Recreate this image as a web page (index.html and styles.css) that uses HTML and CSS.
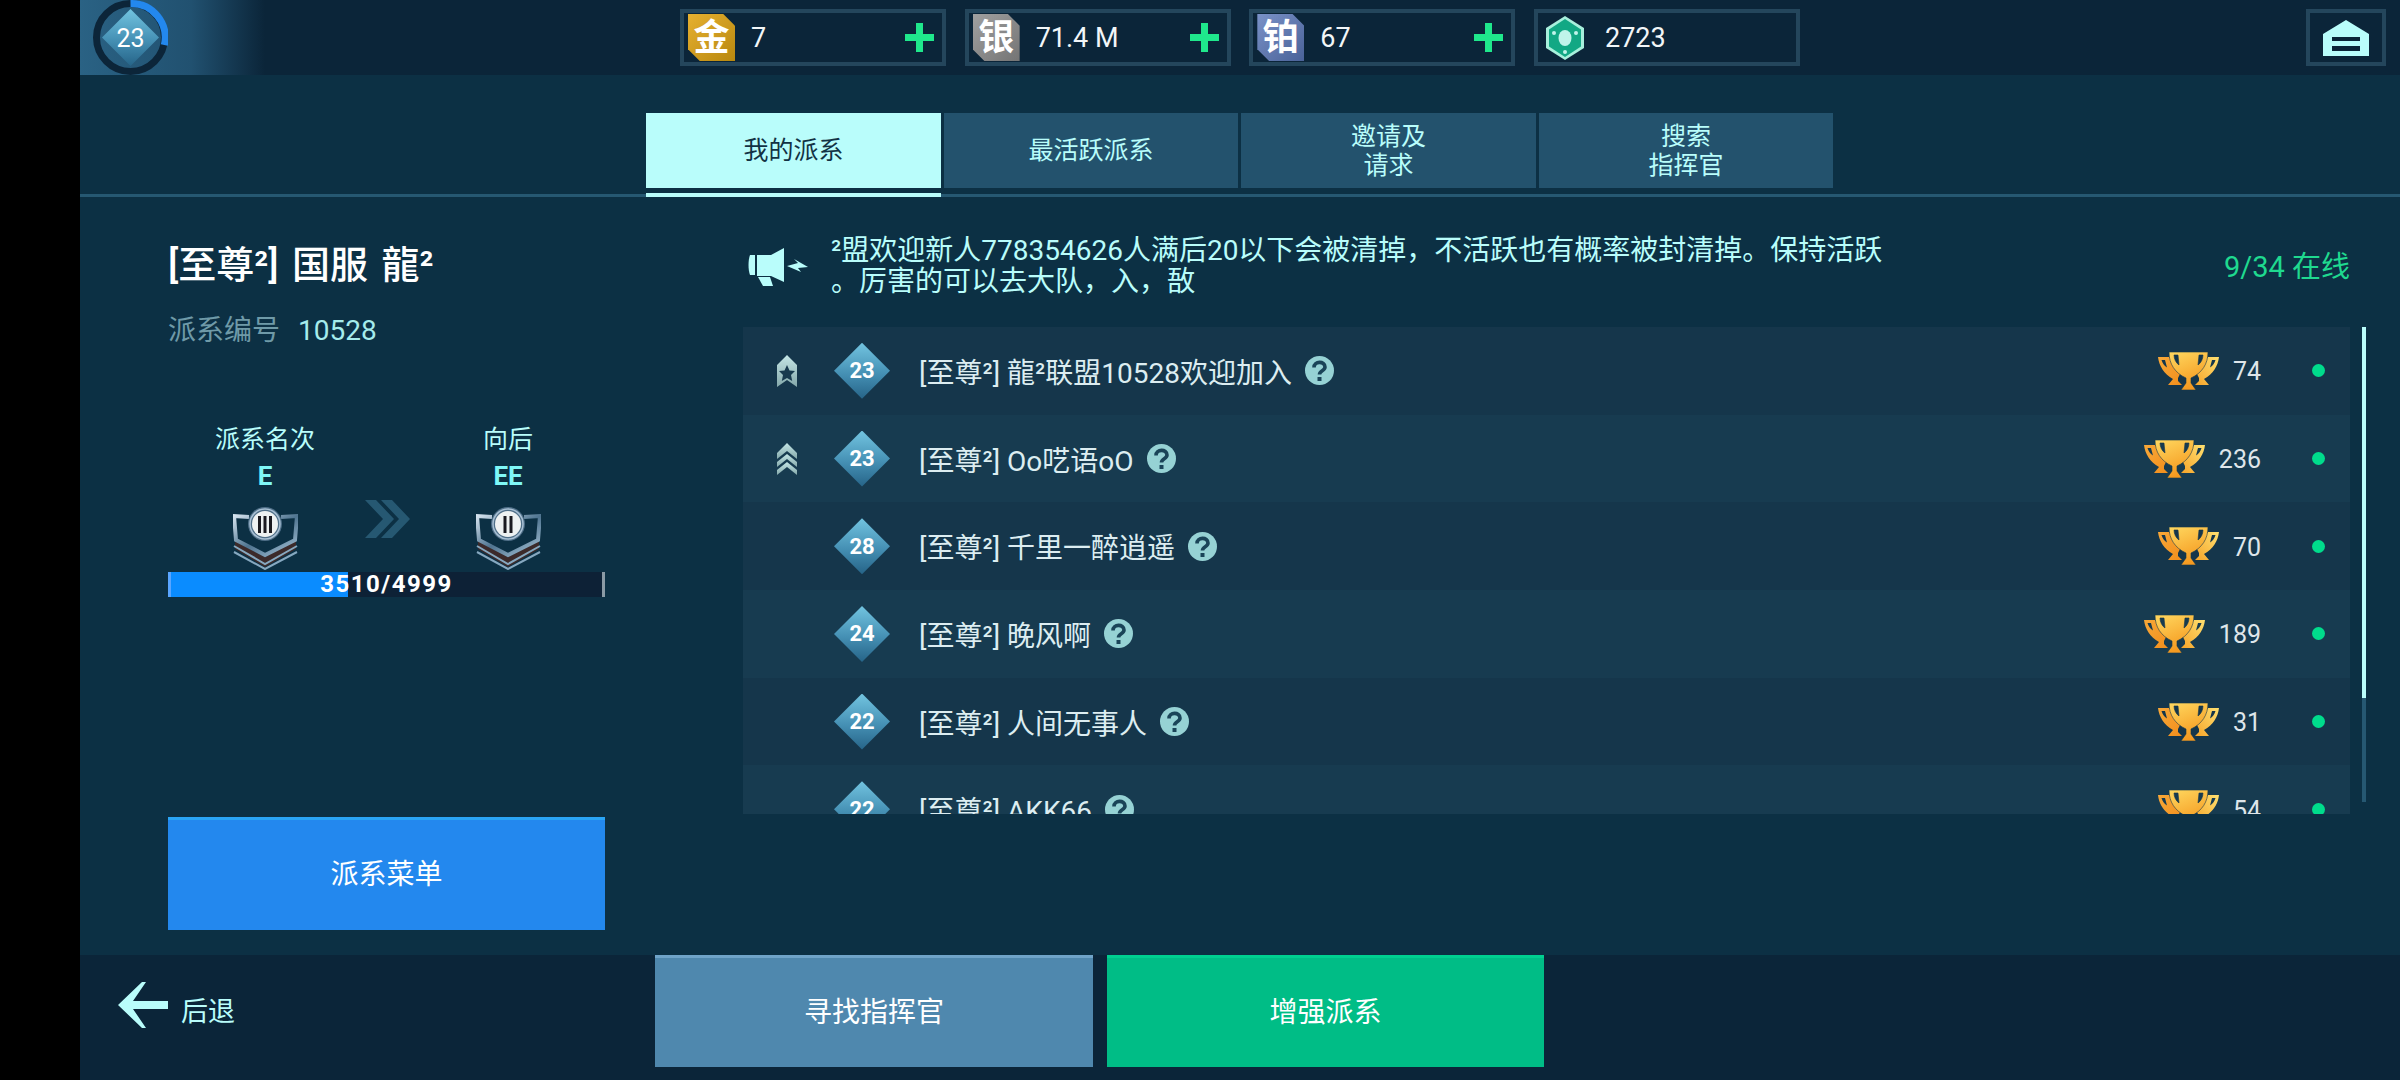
FILE: index.html
```html
<!DOCTYPE html>
<html lang="zh-CN">
<head>
    <meta charset="UTF-8">
    <title>我的派系</title>
    <link rel="stylesheet" href="styles.css">
</head>
<body>
    <svg class="defs" width="0" height="0">
        <defs>
            <linearGradient id="gradCup" x1="0" y1="0" x2="0.4" y2="1">
                <stop offset="0" stop-color="#ffd860"/>
                <stop offset="1" stop-color="#f59a20"/>
            </linearGradient>
            <linearGradient id="gradSideL" x1="0" y1="0" x2="1" y2="1">
                <stop offset="0" stop-color="#f8a838"/>
                <stop offset="1" stop-color="#f28e1c"/>
            </linearGradient>
            <linearGradient id="gradSideR" x1="1" y1="0" x2="0" y2="1">
                <stop offset="0" stop-color="#ffe070"/>
                <stop offset="1" stop-color="#f6a42a"/>
            </linearGradient>
            <linearGradient id="gradDiamond" x1="0" y1="0" x2="0" y2="1">
                <stop offset="0" stop-color="#72c4e0"/>
                <stop offset="0.55" stop-color="#4590b4"/>
                <stop offset="1" stop-color="#266488"/>
            </linearGradient>
            <linearGradient id="gradRank" x1="0" y1="0" x2="0" y2="1">
                <stop offset="0" stop-color="#c4e6e6"/>
                <stop offset="1" stop-color="#84a8aa"/>
            </linearGradient>
            <linearGradient id="gradSteel" x1="0" y1="0" x2="1" y2="1">
                <stop offset="0" stop-color="#d4e2ee"/>
                <stop offset="0.5" stop-color="#4f7490"/>
                <stop offset="1" stop-color="#a8c4d8"/>
            </linearGradient>
            <symbol id="trophy" viewBox="0 0 61 38">
                <path fill="url(#gradSideL)" fill-rule="evenodd" d="M0 5H11L24 18L20 26V29L24 33H10L15 27C6 22 1 14 0 5ZM3.500 8H7L9 15.500C6 13.500 4.500 11 3.500 8Z"/>
                <path fill="url(#gradSideR)" fill-rule="evenodd" d="M61 5H50L37 18L41 26V29L37 33H51L46 27C55 22 60 14 61 5ZM57.500 8H54L52 15.500C55 13.500 56.500 11 57.500 8Z"/>
                <path fill="url(#gradCup)" fill-rule="evenodd" stroke="#16374c" stroke-width="0.6" d="M11 0H50C50 12 44 21 33 26V31L38 38H23L28 31V26C17 21 11 12 11 0ZM16 3C16 7 18 11 21 13L20 3ZM45 3C45 7 43 11 40 13L41 3Z"/>
            </symbol>
            <symbol id="help" viewBox="0 0 29 29">
                <circle cx="14.500" cy="14.500" r="14.500" fill="#96d2d4"/>
                <path fill="none" stroke="#1a4458" stroke-width="3.600" d="M9 11.500C9 4.800 20 4.800 20 11C20 15 14.500 14.500 14.500 18.500"/>
                <rect x="12.500" y="21" width="4" height="4" fill="#1a4458"/>
            </symbol>
            <symbol id="badge" viewBox="0 0 65 63">
                <path fill="#3c2a2a" d="M2 34L32 50L63 34V42L32 60L2 42Z"/>
                <path fill="none" stroke="#86a8c0" stroke-width="2" d="M1 39L32 57L64 39M1 45L32 62L64 45"/>
                <path fill="none" stroke="url(#gradSteel)" stroke-width="4" d="M16 10L1 9L3 33L32 48L62 33L64 9L48 10"/>
                <circle cx="32" cy="17" r="17" fill="#4f6f88"/>
                <circle cx="32" cy="17" r="15" fill="none" stroke="#a8c0d4" stroke-width="1.500"/>
                <circle cx="32" cy="17" r="13" fill="#eef2f2"/>
            </symbol>
        </defs>
    </svg>

    <div class="black-strip"></div>

    <div class="screen">
        <header class="top-bar">
            <div class="level">
                <svg class="level-ring" viewBox="0 0 75 75">
                    <circle cx="37.500" cy="37.500" r="34" fill="none" stroke="#0c2539" stroke-width="7"/>
                    <path d="M37.500 3.500A34 34 0 0 1 71.300 45" fill="none" stroke="#2388ee" stroke-width="7"/>
                    <path d="M37.500 9L66 37.500L37.500 66L9 37.500Z" fill="url(#gradDiamond)"/>
                </svg>
                <span class="level-num">23</span>
            </div>

            <div class="chips">
                <div class="chip">
                    <span class="coin coin-gold">金</span>
                    <span class="chip-value">7</span>
                    <span class="plus"></span>
                </div>
                <div class="chip">
                    <span class="coin coin-silver">银</span>
                    <span class="chip-value">71.4 M</span>
                    <span class="plus"></span>
                </div>
                <div class="chip">
                    <span class="coin coin-plat">铂</span>
                    <span class="chip-value">67</span>
                    <span class="plus"></span>
                </div>
                <div class="chip">
                    <svg class="gem" viewBox="0 0 38 44">
                        <path d="M19 0L38 12V32L19 44L0 32V12Z" fill="#a8f0dc"/>
                        <path d="M19 3L35 13.500V30.500L19 41L3 30.500V13.500Z" fill="#12a884"/>
                        <ellipse cx="19" cy="22" rx="6.500" ry="8" fill="#c0f4ea"/>
                        <circle cx="8" cy="17" r="2" fill="#c0f4ea"/>
                        <circle cx="30" cy="17" r="2" fill="#c0f4ea"/>
                        <circle cx="19" cy="36" r="2" fill="#c0f4ea"/>
                    </svg>
                    <span class="chip-value">2723</span>
                </div>
            </div>

            <div class="home">
                <svg class="home-icon" viewBox="0 0 46 36">
                    <path fill="#b9fdfb" d="M23 0L46 14V36H37V17H9V36H0V14Z"/>
                    <rect x="9" y="21" width="28" height="5" fill="#b9fdfb"/>
                    <rect x="9" y="31" width="28" height="5" fill="#b9fdfb"/>
                </svg>
            </div>
        </header>

        <main class="main">
            <nav class="tabs">
                <div class="tab active">我的派系</div>
                <div class="tab">最活跃派系</div>
                <div class="tab">邀请及<br>请求</div>
                <div class="tab">搜索<br>指挥官</div>
            </nav>

            <div class="content">
                <aside class="faction">
                    <h1 class="faction-name">[至尊²] 国服 龍²</h1>
                    <p class="faction-id"><span class="faction-id-label">派系编号</span>10528</p>

                    <div class="ranks">
                        <div class="rank-col">
                            <div class="rank-label">派系名次</div>
                            <div class="rank-value">E</div>
                            <svg class="rank-badge" viewBox="0 0 65 63">
                                <use href="#badge"/>
                                <rect x="25" y="9" width="3" height="17" fill="#1a1a20"/>
                                <rect x="30.500" y="9" width="3" height="17" fill="#1a1a20"/>
                                <rect x="36" y="9" width="3" height="17" fill="#1a1a20"/>
                            </svg>
                        </div>
                        <svg class="rank-arrow" viewBox="0 0 45 38">
                            <path d="M0 0H11L29 19L11 38H0L18 19Z" fill="#265872"/>
                            <path d="M16 0H27L45 19L27 38H16L34 19Z" fill="#265872"/>
                        </svg>
                        <div class="rank-col rank-col-next">
                            <div class="rank-label">向后</div>
                            <div class="rank-value">EE</div>
                            <svg class="rank-badge" viewBox="0 0 65 63">
                                <use href="#badge"/>
                                <rect x="27.500" y="9" width="3" height="17" fill="#1a1a20"/>
                                <rect x="33.500" y="9" width="3" height="17" fill="#1a1a20"/>
                            </svg>
                        </div>
                    </div>

                    <div class="progress">
                        <div class="progress-fill"></div>
                        <span class="progress-text">3510/4999</span>
                    </div>

                    <button class="btn btn-menu">派系菜单</button>
                </aside>

                <section class="members">
                    <div class="notice">
                        <svg class="notice-icon" viewBox="0 0 60 38">
                            <path d="M2 7H7V27H2C0 22 0 12 2 7Z" fill="#b9fdfb"/>
                            <path d="M9 7H23L36 0V34L23 28H9Z" fill="#b9fdfb"/>
                            <path d="M10 29H22L25 38H15Z" fill="#b9fdfb"/>
                            <path d="M39 18L50 15L46 11L60 19L50 20L53 24Z" fill="#b9fdfb"/>
                        </svg>
                        <p class="notice-text">²盟欢迎新人778354626人满后20以下会被清掉，不活跃也有概率被封清掉。保持活跃<br>。厉害的可以去大队，入，敔</p>
                        <span class="online">9/34 在线</span>
                    </div>

                    <div class="list-wrap">
                        <div class="list">
                            <div class="row">
                                <div class="row-rank">
                                    <svg class="rank-icon" viewBox="0 0 20 32">
                                        <path d="M10 0L20 10V32L10 25L0 32V10Z" fill="url(#gradRank)"/>
                                        <path d="M10 10L12.500 15.500L18 16L14 20L15.200 26L10 23L4.800 26L6 20L2 16L7.500 15.500Z" fill="#173a4e"/>
                                    </svg>
                                </div>
                                <div class="level-tag">23</div>
                                <div class="row-name">[至尊²] 龍²联盟10528欢迎加入</div>
                                <svg class="help"><use href="#help"/></svg>
                                <svg class="trophy"><use href="#trophy"/></svg>
                                <div class="score">74</div>
                                <span class="dot"></span>
                            </div>
                            <div class="row">
                                <div class="row-rank">
                                    <svg class="rank-icon" viewBox="0 0 20 32">
                                        <path d="M10 0L20 10V16L10 8L0 16V10Z" fill="url(#gradRank)"/>
                                        <path d="M10 11L20 19V24L10 16L0 24V19Z" fill="url(#gradRank)"/>
                                        <path d="M10 19L20 27V32L10 24L0 32V27Z" fill="url(#gradRank)"/>
                                    </svg>
                                </div>
                                <div class="level-tag">23</div>
                                <div class="row-name">[至尊²] Oo呓语oO</div>
                                <svg class="help"><use href="#help"/></svg>
                                <svg class="trophy"><use href="#trophy"/></svg>
                                <div class="score">236</div>
                                <span class="dot"></span>
                            </div>
                            <div class="row">
                                <div class="row-rank"></div>
                                <div class="level-tag">28</div>
                                <div class="row-name">[至尊²] 千里一醉逍遥</div>
                                <svg class="help"><use href="#help"/></svg>
                                <svg class="trophy"><use href="#trophy"/></svg>
                                <div class="score">70</div>
                                <span class="dot"></span>
                            </div>
                            <div class="row">
                                <div class="row-rank"></div>
                                <div class="level-tag">24</div>
                                <div class="row-name">[至尊²] 晚风啊</div>
                                <svg class="help"><use href="#help"/></svg>
                                <svg class="trophy"><use href="#trophy"/></svg>
                                <div class="score">189</div>
                                <span class="dot"></span>
                            </div>
                            <div class="row">
                                <div class="row-rank"></div>
                                <div class="level-tag">22</div>
                                <div class="row-name">[至尊²] 人间无事人</div>
                                <svg class="help"><use href="#help"/></svg>
                                <svg class="trophy"><use href="#trophy"/></svg>
                                <div class="score">31</div>
                                <span class="dot"></span>
                            </div>
                            <div class="row">
                                <div class="row-rank"></div>
                                <div class="level-tag">22</div>
                                <div class="row-name">[至尊²] AKK66</div>
                                <svg class="help"><use href="#help"/></svg>
                                <svg class="trophy"><use href="#trophy"/></svg>
                                <div class="score">54</div>
                                <span class="dot"></span>
                            </div>
                        </div>
                        <div class="scrollbar"><div class="scrollbar-thumb"></div></div>
                    </div>
                </section>
            </div>
        </main>

        <footer class="bottom-bar">
            <div class="back">
                <svg class="back-icon" viewBox="0 0 50 46">
                    <path d="M24 0L28 0L15 19H50V27H15L28 46H24L0 23Z" fill="#b9fdfb"/>
                </svg>
                <span>后退</span>
            </div>
            <button class="btn btn-find">寻找指挥官</button>
            <button class="btn btn-boost">增强派系</button>
        </footer>
    </div>
</body>
</html>
```

FILE: styles.css
```css
:root {
    --bar-bg: #0b2539;
    --main-bg: #0c3044;
    --line: #265872;
    --pale: #b9fdfb;
    --row-dark: #15364b;
    --row-light: #173b50;
}

* {
    margin: 0;
    padding: 0;
    box-sizing: border-box;
}

body {
    width: 2400px;
    height: 1080px;
    overflow: hidden;
    display: flex;
    background: #000;
    color: #fff;
    font-family: Roboto, "Noto Sans CJK SC", sans-serif;
    font-size: 28px;
}

.defs {
    position: absolute;
}

.black-strip {
    width: 80px;
    background: #000;
}

.screen {
    flex: 1;
    display: flex;
    flex-direction: column;
}

/* top bar */
.top-bar {
    height: 75px;
    display: flex;
    align-items: center;
    background: var(--bar-bg);
}

.level {
    position: relative;
    width: 185px;
    height: 75px;
    background: linear-gradient(90deg, #2a6284 0%, #215170 60%, #0b2539 100%);
}

.level-ring {
    position: absolute;
    left: 13px;
    top: 0;
    width: 75px;
    height: 75px;
}

.level-num {
    position: absolute;
    left: 13px;
    top: 0;
    width: 75px;
    line-height: 77px;
    text-align: center;
    font-size: 25px;
}

.chips {
    display: flex;
    gap: 18.670px;
    margin-left: 415px;
}

.chip {
    width: 266px;
    height: 57px;
    display: flex;
    align-items: center;
    padding: 0 8px 0 4px;
    border: 4px solid #24465c;
    background: #0b2539;
}

.chip:last-child {
    padding-left: 8px;
}

.coin {
    width: 47px;
    height: 47px;
    display: flex;
    align-items: center;
    justify-content: center;
    font-size: 36px;
    font-weight: 700;
    line-height: 1;
    clip-path: polygon(0 0, 75% 0, 100% 25%, 100% 100%, 25% 100%, 0 75%);
}

.coin-gold {
    background: linear-gradient(135deg, #e6b030, #b8880f);
}

.coin-silver {
    background: linear-gradient(135deg, #a0a0a0, #747474);
}

.coin-plat {
    background: linear-gradient(135deg, #7a92c8, #4a6298);
}

.chip-value {
    flex: 1;
    margin-left: 16px;
    font-size: 27px;
    color: #f2f6f8;
}

.plus {
    position: relative;
    width: 29px;
    height: 29px;
}

.plus::before,
.plus::after {
    content: "";
    position: absolute;
    background: #1fe88c;
}

.plus::before {
    left: 0;
    right: 0;
    top: 11px;
    height: 7px;
}

.plus::after {
    top: 0;
    bottom: 0;
    left: 11px;
    width: 7px;
}

.gem {
    width: 38px;
    height: 44px;
}

.gem + .chip-value {
    margin-left: 21px;
}

.home {
    width: 80px;
    height: 57px;
    margin-left: auto;
    margin-right: 14px;
    display: flex;
    align-items: center;
    justify-content: center;
    border: 4px solid #24465c;
}

.home-icon {
    width: 46px;
    height: 36px;
}

/* main area */
.main {
    flex: 1;
    display: flex;
    flex-direction: column;
    background: var(--main-bg);
}

.tabs {
    height: 122px;
    padding: 38px 0 0 566px;
    display: flex;
    gap: 3px;
    border-bottom: 3px solid var(--line);
}

.tab {
    position: relative;
    width: 294px;
    height: 75px;
    display: flex;
    align-items: center;
    justify-content: center;
    text-align: center;
    font-size: 25px;
    line-height: 29px;
    color: var(--pale);
    background: #23526d;
}

.tab:nth-child(odd) {
    width: 295px;
}

.tab.active {
    color: #123244;
    background: var(--pale);
}

.tab.active::after {
    content: "";
    position: absolute;
    left: 0;
    right: 0;
    top: 80px;
    height: 4px;
    background: var(--pale);
}

.content {
    flex: 1;
    display: flex;
}

/* left panel */
.faction {
    width: 437px;
    margin-left: 88px;
    padding-top: 45px;
}

.faction-name {
    font-size: 38px;
    font-weight: 500;
    line-height: 46px;
    word-spacing: 4px;
    white-space: nowrap;
}

.faction-id {
    margin-top: 25px;
    font-size: 28px;
    line-height: 36px;
    color: #a5ecec;
}

.faction-id-label {
    margin-right: 18px;
    font-size: 28px;
    color: #6f9aa8;
}

.ranks {
    height: 151px;
    margin-top: 73px;
    display: flex;
}

.rank-col {
    width: 194px;
    display: flex;
    flex-direction: column;
    align-items: center;
    color: var(--pale);
}

.rank-col-next {
    width: 128px;
    margin-left: 34px;
}

.rank-label {
    font-size: 25px;
    line-height: 36px;
}

.rank-value {
    font-size: 26px;
    line-height: 36px;
    font-weight: 700;
    color: #7ff7f7;
}

.rank-badge {
    width: 65px;
    height: 63px;
    margin-top: 13px;
}

.rank-arrow {
    width: 45px;
    height: 38px;
    margin: 78px 0 0 3px;
}

.progress {
    position: relative;
    height: 25px;
    margin-top: -1px;
    background: #0d2136;
    border-left: 3px solid #5aa5ff;
    border-right: 3px solid #8a9aa5;
}

.progress-fill {
    width: 177px;
    height: 100%;
    background: #0a8cff;
}

.progress-text {
    position: absolute;
    left: 0;
    right: 0;
    top: 0;
    text-align: center;
    font-size: 24px;
    font-weight: 700;
    line-height: 25px;
    letter-spacing: 1.500px;
}

.btn {
    display: block;
    height: 113px;
    border: none;
    color: #fff;
    font-family: inherit;
    font-size: 28px;
}

.btn-menu {
    width: 437px;
    margin-top: 220px;
    padding-bottom: 6px;
    background: #2388ee;
    border-top: 3px solid #2aa4f5;
}

/* right panel */
.members {
    width: 1623px;
    margin-left: 138px;
}

.notice {
    height: 130px;
    display: flex;
    padding-top: 38px;
}

.notice-icon {
    width: 60px;
    height: 38px;
    margin: 13px 23px 0 5px;
}

.notice-text {
    flex: 1;
    font-size: 28px;
    line-height: 31px;
    color: var(--pale);
}

.online {
    margin: 14px 16px 0 0;
    font-size: 29px;
    line-height: 36px;
    color: #1fd98f;
}

.list-wrap {
    display: flex;
    gap: 12px;
}

.list {
    width: 1607px;
    height: 487px;
    overflow: hidden;
}

.row {
    height: 87.700px;
    display: flex;
    align-items: center;
    background: var(--row-dark);
}

.row:nth-child(even) {
    background: var(--row-light);
}

.row-rank {
    width: 91px;
    display: flex;
    padding-left: 34px;
}

.rank-icon {
    width: 20px;
    height: 32px;
}

.level-tag {
    width: 56px;
    height: 56px;
    display: flex;
    align-items: center;
    justify-content: center;
    font-size: 22px;
    font-weight: 700;
    background: linear-gradient(180deg, #72c4e0, #4590b4 55%, #266488);
    clip-path: polygon(50% 0, 100% 50%, 50% 100%, 0 50%);
}

.row-name {
    margin-left: 29px;
    font-size: 28px;
    color: #dcedf1;
}

.help {
    width: 29px;
    height: 29px;
    margin-left: 13px;
}

.trophy {
    width: 61px;
    height: 38px;
    margin-left: auto;
}

.score {
    margin: 2px 0 0 14px;
    font-size: 25px;
    color: #dfe6ea;
}

.dot {
    width: 13px;
    height: 13px;
    margin: 0 25px 0 51px;
    border-radius: 50%;
    background: #00dc8c;
}

.scrollbar {
    width: 4px;
    height: 475px;
    background: var(--line);
}

.scrollbar-thumb {
    height: 371px;
    background: var(--pale);
}

/* bottom bar */
.bottom-bar {
    height: 125px;
    display: flex;
    align-items: flex-start;
    background: var(--bar-bg);
}

.back {
    width: 575px;
    padding: 26px 0 0 38px;
    display: flex;
    align-items: center;
    gap: 13px;
    font-size: 27px;
    color: var(--pale);
}

.back-icon {
    width: 50px;
    height: 46px;
}

.back span {
    margin-top: 9px;
}

.btn-find {
    width: 438px;
    height: 112px;
    padding-bottom: 6px;
    background: #4f88ae;
    border-top: 3px solid #6fa3c8;
}

.btn-boost {
    width: 437px;
    height: 112px;
    margin-left: 14px;
    padding-bottom: 6px;
    background: #00bd86;
    border-top: 3px solid #00cf90;
}
```
